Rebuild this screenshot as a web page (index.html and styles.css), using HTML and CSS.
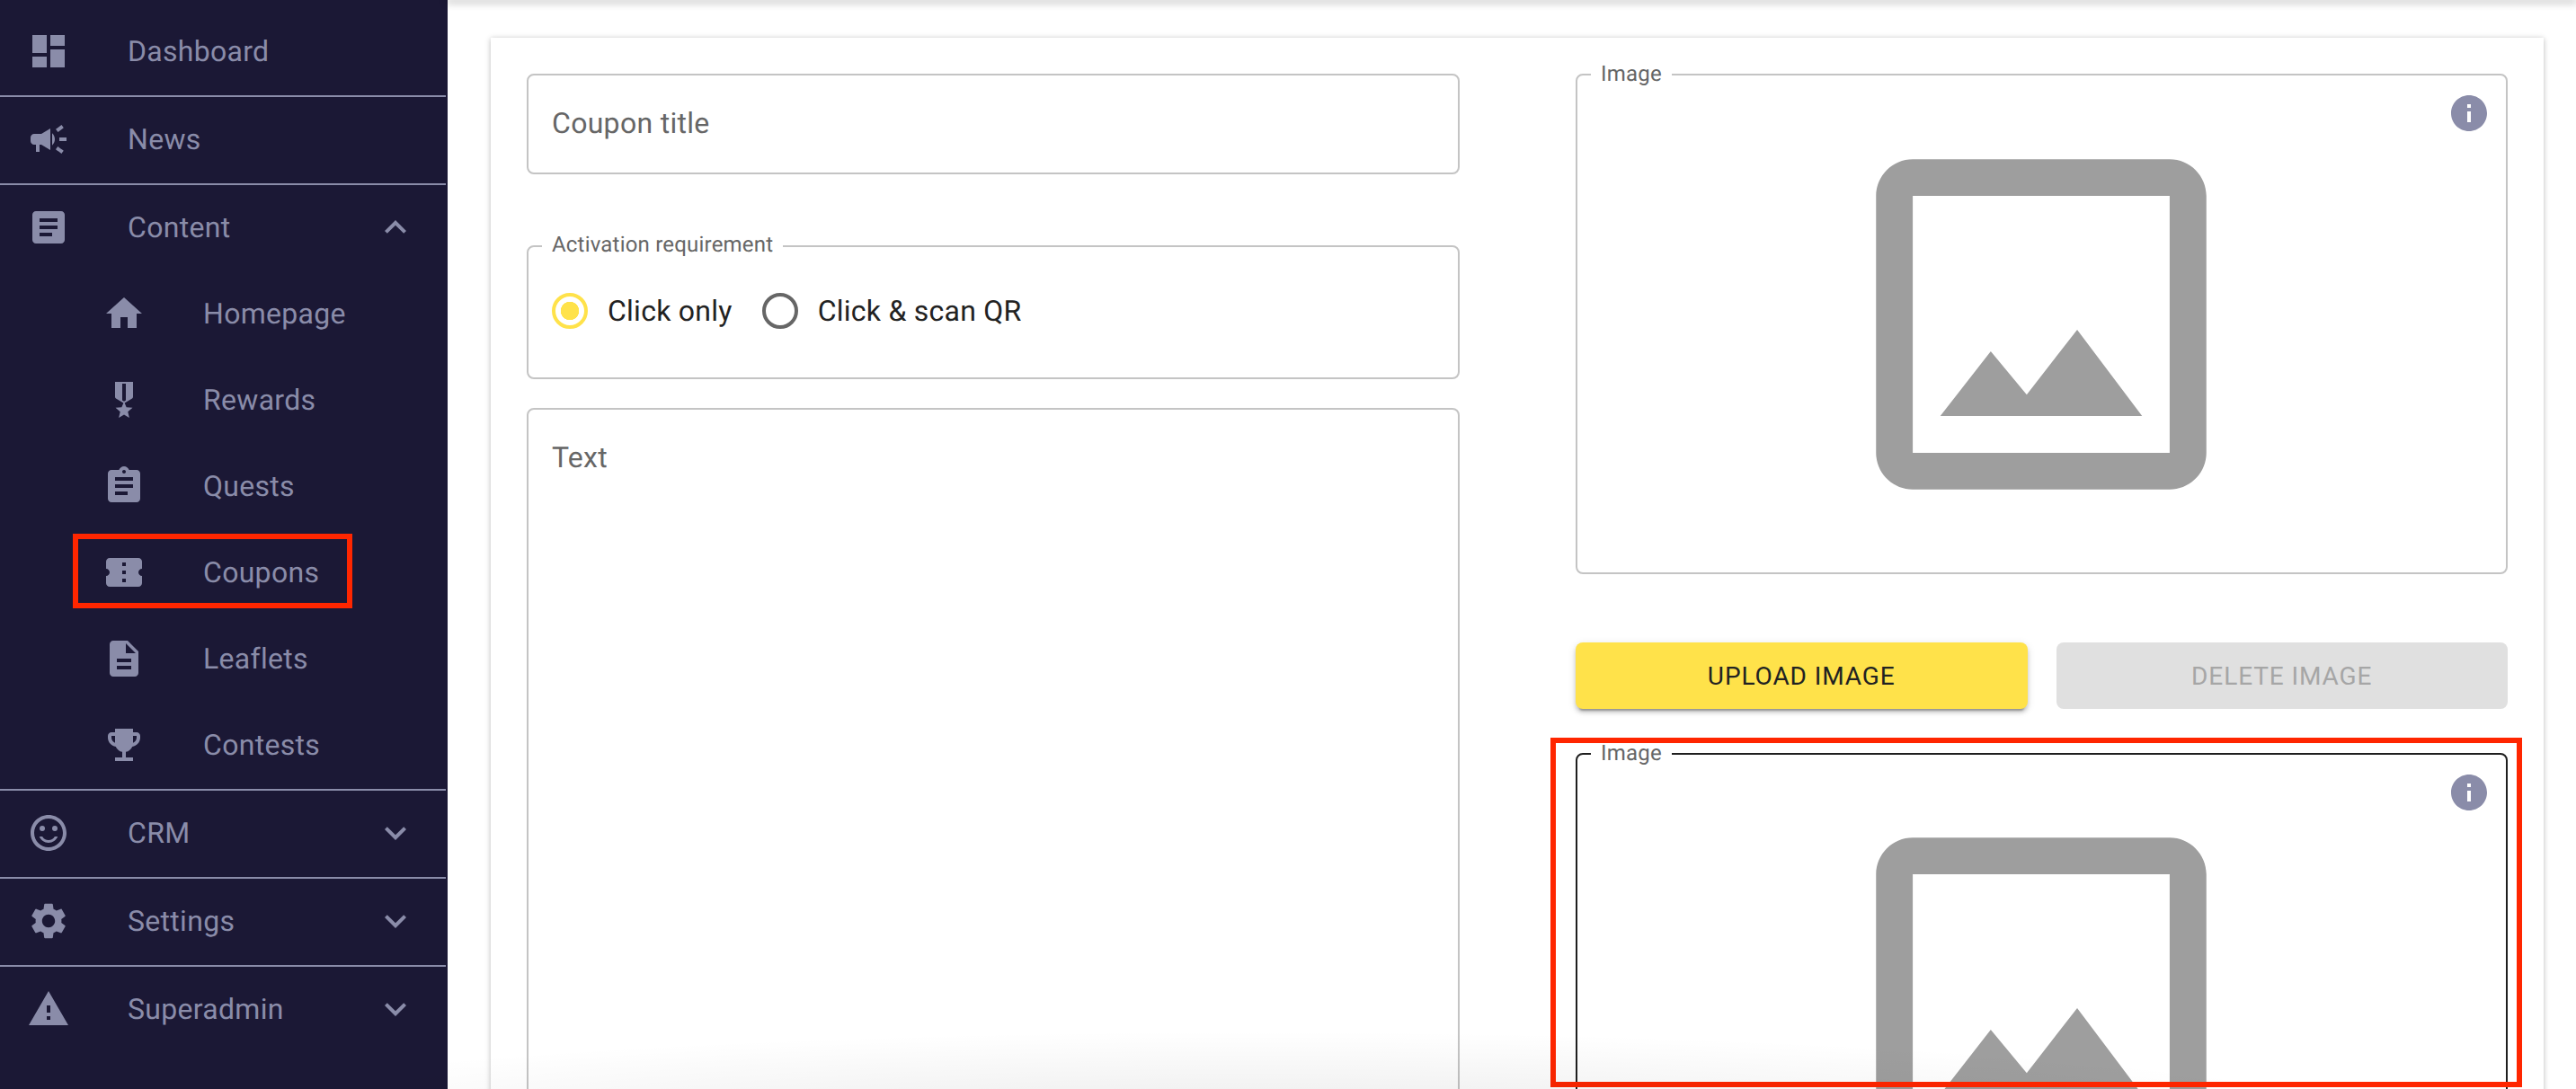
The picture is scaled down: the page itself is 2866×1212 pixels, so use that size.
FILE: index.html
```html
<!DOCTYPE html>
<html lang="en">
<head>
<meta charset="utf-8">
<title>Coupons</title>
<link rel="stylesheet" href="styles.css">
</head>
<body>
<div class="app">
  <nav class="sidebar">
    <div class="nav-item"><svg class="icon" viewBox="0 0 24 24"><path d="M3 13h8V3H3v10zm0 8h8v-6H3v6zm10 0h8V11h-8v10zm0-18v6h8V3h-8z"/></svg><span class="nav-label">Dashboard</span></div>
    <hr class="divider">
    <div class="nav-item"><svg class="icon" viewBox="0 0 24 24"><path d="M18 11v2h4v-2h-4zm-2 6.61c.96.71 2.21 1.65 3.2 2.39.4-.53.8-1.07 1.2-1.6-.99-.74-2.24-1.68-3.2-2.4-.4.54-.8 1.08-1.2 1.61zM20.4 5.6c-.4-.53-.8-1.07-1.2-1.6-.99.74-2.24 1.68-3.2 2.4.4.53.8 1.07 1.2 1.6.96-.72 2.21-1.65 3.2-2.4zM4 9c-1.1 0-2 .9-2 2v2c0 1.1.9 2 2 2h1v4h2v-4h1l5 3V6L8 9H4zm11.5 3c0-1.33-.58-2.53-1.5-3.35v6.69c.92-.81 1.5-2.01 1.5-3.34z"/></svg><span class="nav-label">News</span></div>
    <hr class="divider">
    <div class="nav-item"><svg class="icon" viewBox="0 0 24 24"><path d="M19 3H5c-1.1 0-2 .9-2 2v14c0 1.1.9 2 2 2h14c1.1 0 2-.9 2-2V5c0-1.1-.9-2-2-2zm-5 14H7v-2h7v2zm3-4H7v-2h10v2zm0-4H7V7h10v2z"/></svg><span class="nav-label">Content</span><svg class="icon chevron" viewBox="0 0 24 24"><path d="M12 8l-6 6 1.41 1.41L12 10.83l4.59 4.58L18 14z"/></svg></div>
    <div class="sub-list">
      <div class="nav-item sub"><svg class="icon" viewBox="0 0 24 24"><path d="M10 20v-6h4v6h5v-8h3L12 3 2 12h3v8z"/></svg><span class="nav-label">Homepage</span></div>
      <div class="nav-item sub"><svg class="icon" viewBox="0 0 24 24"><path d="M17 10.43V2H7v8.43c0 .35.18.68.49.86l4.18 2.51-.99 2.34-3.41.29 2.59 2.24L9.07 22 12 20.23 14.93 22l-.78-3.33 2.59-2.24-3.41-.29-.99-2.34 4.18-2.51c.3-.18.48-.5.48-.86zm-4 1.8l-1 .6-1-.6V3h2v9.23z"/></svg><span class="nav-label">Rewards</span></div>
      <div class="nav-item sub"><svg class="icon" viewBox="0 0 24 24"><path d="M19 3h-4.18C14.4 1.84 13.3 1 12 1c-1.3 0-2.4.84-2.82 2H5c-1.1 0-2 .9-2 2v14c0 1.1.9 2 2 2h14c1.1 0 2-.9 2-2V5c0-1.1-.9-2-2-2zm-7 0c.55 0 1 .45 1 1s-.45 1-1 1-1-.45-1-1 .45-1 1-1zm2 14H7v-2h7v2zm3-4H7v-2h10v2zm0-4H7V7h10v2z"/></svg><span class="nav-label">Quests</span></div>
      <div class="nav-item sub marked"><svg class="icon" viewBox="0 0 24 24"><path d="M22 10V6c0-1.11-.9-2-2-2H4c-1.1 0-1.99.89-1.99 2v4c1.1 0 1.99.9 1.99 2s-.89 2-2 2v4c0 1.1.9 2 2 2h16c1.1 0 2-.9 2-2v-4c-1.1 0-2-.9-2-2s.9-2 2-2zm-9 7.5h-2v-2h2v2zm0-4.5h-2v-2h2v2zm0-4.5h-2v-2h2v2z"/></svg><span class="nav-label">Coupons</span><span class="mark mark-nav"></span></div>
      <div class="nav-item sub"><svg class="icon" viewBox="0 0 24 24"><path d="M14 2H6c-1.1 0-1.99.9-1.99 2L4 20c0 1.1.89 2 1.99 2H18c1.1 0 2-.9 2-2V8l-6-6zm2 16H8v-2h8v2zm0-4H8v-2h8v2zm-3-5V3.5L18.5 9H13z"/></svg><span class="nav-label">Leaflets</span></div>
      <div class="nav-item sub"><svg class="icon" viewBox="0 0 24 24"><path d="M19 5h-2V3H7v2H5c-1.1 0-2 .9-2 2v1c0 2.55 1.92 4.63 4.39 4.94.63 1.5 1.98 2.63 3.61 2.96V19H7v2h10v-2h-4v-3.1c1.63-.33 2.98-1.46 3.61-2.96C19.08 12.63 21 10.55 21 8V7c0-1.1-.9-2-2-2zM5 8V7h2v3.82C5.84 10.4 5 9.3 5 8zm14 0c0 1.3-.84 2.4-2 2.82V7h2v1z"/></svg><span class="nav-label">Contests</span></div>
    </div>
    <hr class="divider">
    <div class="nav-item"><svg class="icon" viewBox="0 0 24 24"><circle cx="15.5" cy="9.5" r="1.5"/><circle cx="8.5" cy="9.5" r="1.5"/><path d="M12 16c-1.48 0-2.75-.81-3.45-2H6.88c.8 2.05 2.79 3.5 5.12 3.5s4.32-1.45 5.12-3.5h-1.67c-.7 1.19-1.97 2-3.45 2zm-.01-14C6.47 2 2 6.48 2 12s4.47 10 9.99 10C17.52 22 22 17.52 22 12S17.52 2 11.99 2zM12 20c-4.42 0-8-3.58-8-8s3.58-8 8-8 8 3.58 8 8-3.58 8-8 8z"/></svg><span class="nav-label">CRM</span><svg class="icon chevron" viewBox="0 0 24 24"><path d="M16.59 8.59L12 13.17 7.41 8.59 6 10l6 6 6-6z"/></svg></div>
    <hr class="divider">
    <div class="nav-item"><svg class="icon" viewBox="0 0 24 24"><path d="M19.14,12.94c0.04-0.3,0.06-0.61,0.06-0.94c0-0.32-0.02-0.64-0.07-0.94l2.03-1.58c0.18-0.14,0.23-0.41,0.12-0.61 l-1.92-3.32c-0.12-0.22-0.37-0.29-0.59-0.22l-2.39,0.96c-0.5-0.38-1.03-0.7-1.62-0.94L14.4,2.81c-0.04-0.24-0.24-0.41-0.48-0.41 h-3.84c-0.24,0-0.43,0.17-0.47,0.41L9.25,5.35C8.66,5.59,8.12,5.92,7.63,6.29L5.24,5.33c-0.22-0.08-0.47,0-0.59,0.22L2.74,8.87 C2.62,9.08,2.66,9.34,2.86,9.48l2.03,1.58C4.84,11.36,4.8,11.69,4.8,12s0.02,0.64,0.07,0.94l-2.03,1.58 c-0.18,0.14-0.23,0.41-0.12,0.61l1.92,3.32c0.12,0.22,0.37,0.29,0.59,0.22l2.39-0.96c0.5,0.38,1.03,0.7,1.62,0.94l0.36,2.54 c0.05,0.24,0.24,0.41,0.48,0.41h3.84c0.24,0,0.44-0.17,0.47-0.41l0.36-2.54c0.59-0.24,1.13-0.56,1.62-0.94l2.39,0.96 c0.22,0.08,0.47,0,0.59-0.22l1.92-3.32c0.12-0.22,0.07-0.47-0.12-0.61L19.14,12.94z M12,15.6c-1.98,0-3.6-1.62-3.6-3.6 s1.62-3.6,3.6-3.6s3.6,1.62,3.6,3.6S13.98,15.6,12,15.6z"/></svg><span class="nav-label">Settings</span><svg class="icon chevron" viewBox="0 0 24 24"><path d="M16.59 8.59L12 13.17 7.41 8.59 6 10l6 6 6-6z"/></svg></div>
    <hr class="divider">
    <div class="nav-item"><svg class="icon" viewBox="0 0 24 24"><path d="M1 21h22L12 2 1 21zm12-3h-2v-2h2v2zm0-4h-2v-4h2v4z"/></svg><span class="nav-label">Superadmin</span><svg class="icon chevron" viewBox="0 0 24 24"><path d="M16.59 8.59L12 13.17 7.41 8.59 6 10l6 6 6-6z"/></svg></div>
  </nav>

  <main class="main">
    <div class="topbar-shadow"></div>
    <section class="card">
      <div class="col">
        <div class="field field-title"><span class="placeholder">Coupon title</span></div>
        <div class="field field-radio">
          <span class="notch">Activation requirement</span>
          <div class="radio-group">
            <span class="radio radio-on"></span><span class="radio-label">Click only</span>
            <span class="radio"></span><span class="radio-label">Click &amp; scan QR</span>
          </div>
        </div>
        <div class="field field-text"><span class="placeholder">Text</span></div>
      </div>
      <div class="col">
        <div class="field field-image">
          <span class="notch">Image</span>
          <svg class="info" viewBox="0 0 24 24"><path d="M12 2C6.48 2 2 6.48 2 12s4.48 10 10 10 10-4.48 10-10S17.52 2 12 2zm1 15h-2v-6h2v6zm0-8h-2V7h2v2z"/></svg>
          <svg class="picture" viewBox="0 0 24 24"><path d="M19 3H5c-1.1 0-2 .9-2 2v14c0 1.1.9 2 2 2h14c1.1 0 2-.9 2-2V5c0-1.1-.9-2-2-2zm0 16H5V5h14v14z"/><path d="M13.96 12.29l-2.75 3.54-1.96-2.36L6.5 17h11l-3.54-4.71z"/></svg>
        </div>
        <div class="buttons">
          <button class="btn btn-primary" type="button">UPLOAD IMAGE</button>
          <button class="btn btn-disabled" type="button" disabled>DELETE IMAGE</button>
        </div>
        <div class="field field-image field-active">
          <span class="notch">Image</span>
          <svg class="info" viewBox="0 0 24 24"><path d="M12 2C6.48 2 2 6.48 2 12s4.48 10 10 10 10-4.48 10-10S17.52 2 12 2zm1 15h-2v-6h2v6zm0-8h-2V7h2v2z"/></svg>
          <svg class="picture" viewBox="0 0 24 24"><path d="M19 3H5c-1.1 0-2 .9-2 2v14c0 1.1.9 2 2 2h14c1.1 0 2-.9 2-2V5c0-1.1-.9-2-2-2zm0 16H5V5h14v14z"/><path d="M13.96 12.29l-2.75 3.54-1.96-2.36L6.5 17h11l-3.54-4.71z"/></svg>
        </div>
      </div>
    </section>
    <span class="mark mark-image"></span>
  </main>
  <div class="bottom-fade"></div>
</div>
</body>
</html>
```

FILE: styles.css
```css
* { box-sizing: border-box; }
html, body { margin: 0; height: 100%; }
body {
  font-family: Roboto, "Liberation Sans", sans-serif;
  background: #fff;
  overflow: hidden;
  text-rendering: geometricPrecision;
}
.app {
  position: relative;
  display: flex;
  height: 1212px;
  overflow: hidden;
}

/* Sidebar */
.sidebar {
  flex: 0 0 498px;
  height: 100%;
  padding-top: 9px;
  background: #1b1835;
  color: #8a8ca9;
}
.nav-item {
  position: relative;
  display: flex;
  align-items: center;
  height: 96px;
  padding-left: 30px;
  padding-right: 34px;
}
.nav-item.sub { padding-left: 114px; }
.icon {
  flex: 0 0 48px;
  width: 48px;
  height: 48px;
  fill: currentColor;
}
.nav-label {
  margin-left: 64px;
  font-size: 32px;
  line-height: 48px;
  letter-spacing: 0.3px;
}
.chevron { margin-left: auto; }
.divider {
  width: 496px;
  height: 2px;
  margin: 1px 0 0;
  border: 0;
  background: #8a8ca9;
}
.divider + .nav-item { margin-top: -1px; }

/* Main */
.main {
  position: relative;
  flex: 1 1 auto;
  min-width: 0;
  padding: 42px 36px 0 48px;
}
.topbar-shadow {
  position: absolute;
  left: 0;
  right: 0;
  top: 0;
  height: 0;
  box-shadow: 0 1px 8px 2px rgba(0, 0, 0, 0.3);
}
.card {
  display: grid;
  grid-template-columns: 1038px 1037px;
  column-gap: 129px;
  padding: 40px;
  background: #fff;
  box-shadow: 0 1px 6px rgba(0, 0, 0, 0.28);
}
.col { display: flex; flex-direction: column; }

.field {
  position: relative;
  border: 2px solid #c4c4c4;
  border-radius: 8px;
}
.placeholder {
  font-size: 32px;
  line-height: 48px;
  letter-spacing: 0.3px;
  color: #666;
}
.notch {
  position: absolute;
  left: 15px;
  top: -16px;
  padding: 0 11px;
  background: #fff;
  font-size: 24px;
  line-height: 28px;
  letter-spacing: 0.2px;
  color: #666;
}
.field-title {
  height: 112px;
  padding: 29px 26px;
}
.field-radio {
  height: 149px;
  margin-top: 79px;
  padding: 47px 26px 0;
}
.field-radio .notch { top: -17px; }
.radio-group {
  display: flex;
  align-items: center;
  height: 48px;
}
.radio {
  flex: 0 0 40px;
  width: 40px;
  height: 40px;
  border: 4px solid #666;
  border-radius: 50%;
}
.radio-on {
  border-color: #ffe24a;
  background: radial-gradient(circle, #ffe24a 0 10px, transparent 10.5px);
}
.radio-label {
  margin: 0 33px 0 22px;
  font-size: 32px;
  line-height: 48px;
  letter-spacing: 0.25px;
  color: #222;
}
.field-text {
  height: 1000px;
  margin-top: 32px;
  padding: 29px 26px;
}
.field-image {
  height: 557px;
  flex: 0 0 557px;
}
.field-active { border-color: #1f1f1f; }
.info {
  position: absolute;
  right: 17px;
  top: 18px;
  width: 48px;
  height: 48px;
  fill: #8a8ca9;
}
.picture {
  display: block;
  width: 490px;
  height: 490px;
  margin: 32px 0 0 271px;
  fill: #9e9e9e;
}
.field-active .picture { margin-top: 31px; }
.buttons {
  display: grid;
  grid-template-columns: 1fr 1fr;
  column-gap: 32px;
  margin: 76px 0 49px;
}
.btn {
  height: 74px;
  border: 0;
  border-radius: 8px;
  font-family: inherit;
  font-size: 28px;
  font-weight: 400;
  letter-spacing: 0.9px;
}
.btn-primary {
  background: #ffe24a;
  color: #222;
  box-shadow: 0 6px 2px -4px rgba(0, 0, 0, 0.25), 0 4px 4px rgba(0, 0, 0, 0.16), 0 2px 10px rgba(0, 0, 0, 0.12);
}
.btn-disabled {
  background: #e0e0e0;
  color: #a6a6a6;
}

/* Annotation frames */
.mark {
  position: absolute;
  border: 6px solid #ff2600;
  pointer-events: none;
}
.mark-nav {
  left: 81px;
  top: 5px;
  width: 311px;
  height: 83px;
}
.mark-image {
  left: 1227px;
  top: 821px;
  width: 1081px;
  height: 389px;
}
.bottom-fade {
  position: absolute;
  inset: 0;
  pointer-events: none;
  background: radial-gradient(ellipse 1300px 115px at 1400px 1262px, rgba(0, 0, 0, 0.09), rgba(0, 0, 0, 0));
}
```
